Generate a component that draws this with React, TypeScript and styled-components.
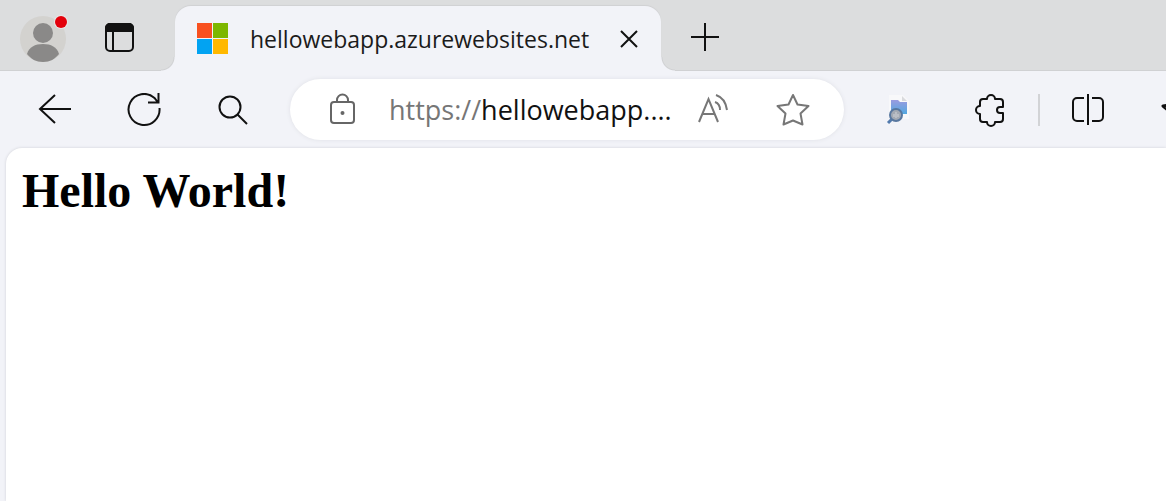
import React from "react";
import styled, { createGlobalStyle } from "styled-components";

const chrome = "#f2f3f8";
const strip = "#dcddde";
const edge = "#d0d1d3";
const uiFont = `"Open Sans", "Noto Sans", sans-serif`;

const GlobalStyle = createGlobalStyle`
  * { box-sizing: border-box; }
  body { margin: 0; background: ${chrome}; overflow-x: hidden; }
`;

const Browser = styled.div`
  display: flex;
  flex-direction: column;
  min-height: 100vh;
  background: ${chrome};
  font-family: ${uiFont};
`;

const TabStrip = styled.header`
  display: flex;
  align-items: flex-start;
  height: 71px;
  padding-top: 6px;
  background: ${strip};
  box-shadow: inset 0 -1px 0 ${edge};
`;

const IconButton = styled.button<{ $width: number; $color?: string }>`
  display: flex;
  flex: none;
  align-items: center;
  justify-content: center;
  width: ${(p) => p.$width}px;
  height: 62px;
  padding: 0;
  border: 0;
  background: none;
  color: ${(p) => p.$color ?? "#111"};
`;

const StripTools = styled.div`
  display: flex;
  flex: none;
  width: 175px;
  padding-left: 4px;
`;

const Tab = styled.div`
  position: relative;
  display: flex;
  flex: 0 1 486px;
  align-items: center;
  height: 65px;
  padding: 0 8px 0 22px;
  border-radius: 16px 16px 0 0;
  background: ${chrome};
  box-shadow: 0 -1px 1px ${edge};

  &::before,
  &::after {
    content: "";
    position: absolute;
    bottom: 0;
    width: 14px;
    height: 14px;
  }
  &::before {
    right: 100%;
    background: radial-gradient(circle at 0 0, transparent 12px, ${edge} 13px, ${chrome} 14px);
  }
  &::after {
    left: 100%;
    background: radial-gradient(circle at 100% 0, transparent 12px, ${edge} 13px, ${chrome} 14px);
  }
`;

const TabTitle = styled.span`
  flex: 1;
  margin-left: 22px;
  overflow: hidden;
  font-size: 23px;
  line-height: 32px;
  white-space: nowrap;
  color: #1b1b1b;
`;

const Toolbar = styled.nav`
  display: flex;
  align-items: center;
  height: 77px;
  padding-left: 10px;
`;

const AddressBar = styled.form`
  display: flex;
  flex: 1;
  align-items: center;
  min-width: 0;
  height: 61px;
  margin: 0 8px 0 13px;
  padding: 0 11px 0 38px;
  border-radius: 31px;
  background: #fff;
  box-shadow: 0 0 4px #dfe0e6;
  font-size: 27px;
  line-height: 34px;
`;

const Scheme = styled.label`
  margin-left: 33px;
  color: #767676;
`;

const AddressInput = styled.input`
  flex: 1;
  min-width: 0;
  padding: 0;
  border: 0;
  outline: 0;
  background: none;
  color: #111;
  font: inherit;
`;

const Divider = styled.span`
  flex: none;
  width: 2px;
  height: 32px;
  margin: 0 2px;
  background: #d2d3d6;
`;

const EdgeButton = styled(IconButton)`
  justify-content: flex-start;
  padding-left: 27px;
  overflow: hidden;
`;

const Page = styled.main`
  flex: 1;
  margin-left: 6px;
  padding: 16px;
  border-radius: 16px 0 0 0;
  background: #fff;
  box-shadow: 0 0 3px #cfd0d6;
`;

const Heading = styled.h1`
  margin: 0;
  font-family: "Liberation Serif", "Times New Roman", serif;
  font-size: 48px;
  line-height: 54px;
  color: #000;
`;

const Icon = styled.svg.attrs<{ stroke?: string }>((p) => ({
  fill: "none",
  stroke: p.stroke ?? "currentColor",
  "aria-hidden": true,
}))`
  display: block;
  flex: none;
`;

export default function App() {
  return (
    <Browser>
      <GlobalStyle />
      <TabStrip>
        <StripTools>
          <IconButton $width={77} aria-label="Profile">
            <Icon width="50" height="50" viewBox="0 0 50 50" stroke="none">
              <circle cx="25" cy="27" r="23" fill="#d3d2cf" />
              <circle cx="25" cy="21" r="10" fill="#8a8988" />
              <path d="M9 42c2-7 8-10 16-10s14 3 16 10c-4 5-9 8-16 8s-12-3-16-8Z" fill="#8a8988" />
              <circle cx="43" cy="10" r="7" fill="#e9e5e5" />
              <circle cx="43" cy="10" r="6" fill="#e3000b" />
            </Icon>
          </IconButton>
          <IconButton $width={77} aria-label="Tab actions">
            <Icon width="30" height="30" viewBox="0 0 30 30" strokeWidth="2">
              <rect x="1" y="2" width="27" height="27" rx="4" />
              <path d="M1 9V6a4 4 0 0 1 4-4h19a4 4 0 0 1 4 4v3Z" fill="currentColor" />
              <path d="M8 9v20" />
            </Icon>
          </IconButton>
        </StripTools>
        <Tab>
          <Icon width="31" height="31" viewBox="0 0 31 31" stroke="none">
            <path d="M0 0h15v15H0Z" fill="#f8501f" />
            <path d="M16 0h15v15H16Z" fill="#7db700" />
            <path d="M0 16h15v15H0Z" fill="#02a3f2" />
            <path d="M16 16h15v15H16Z" fill="#ffb800" />
          </Icon>
          <TabTitle>hellowebapp.azurewebsites.net</TabTitle>
          <IconButton $width={48} aria-label="Close tab">
            <Icon width="18" height="18" viewBox="0 0 18 18" strokeWidth="2">
              <path d="m1 1 16 16M17 1 1 17" />
            </Icon>
          </IconButton>
        </Tab>
        <IconButton $width={88} aria-label="New tab">
          <Icon width="30" height="30" viewBox="0 0 30 30" strokeWidth="2">
            <path d="M15 1v28M1 15h28" />
          </Icon>
        </IconButton>
      </TabStrip>

      <Toolbar>
        <IconButton $width={89} aria-label="Back">
          <Icon width="34" height="32" viewBox="0 0 34 32" strokeWidth="2">
            <path d="M17 1 2 15l15 14M2 15h31" />
          </Icon>
        </IconButton>
        <IconButton $width={89} aria-label="Refresh">
          <Icon width="34" height="34" viewBox="0 0 34 34" strokeWidth="2">
            <path d="M32.500 15A15.500 15.500 0 1 1 27.500 5L31 9.500M31.500 0v9.500H21" />
          </Icon>
        </IconButton>
        <IconButton $width={89} aria-label="Search">
          <Icon width="30" height="30" viewBox="0 0 30 30" strokeWidth="2">
            <circle cx="12" cy="12" r="10.500" />
            <path d="m19.500 19.500 9.500 9.500" />
          </Icon>
        </IconButton>

        <AddressBar onSubmit={(e) => e.preventDefault()}>
          <Icon width="28" height="34" viewBox="0 0 28 34" strokeWidth="2" color="#666">
            <rect x="3" y="9" width="23" height="21" rx="3" />
            <path d="M9 9V7a5.500 5.500 0 0 1 11 0v2" />
            <circle cx="14.500" cy="20" r="2" fill="currentColor" stroke="none" />
          </Icon>
          <Scheme htmlFor="address">https://</Scheme>
          <AddressInput id="address" defaultValue="hellowebapp...." />
          <IconButton $width={80} $color="#777" type="button" aria-label="Read aloud">
            <Icon width="32" height="32" viewBox="0 0 32 32" strokeWidth="2">
              <path d="M2 28 11.500 5 21 28M5 20h13M18 8c3 1 5 4 5 8M19 1c6 2 10 8 11 15" />
            </Icon>
          </IconButton>
          <IconButton $width={80} $color="#777" type="button" aria-label="Add to favorites">
            <Icon width="34" height="34" viewBox="0 0 34 34" strokeWidth="2" strokeLinejoin="round">
              <path d="m17 2 4.500 9.500L32.500 13l-8 7.500 2 11L17 27.500 7.500 31.500l2-11-8-7.500 11-1.500Z" />
            </Icon>
          </IconButton>
        </AddressBar>

        <IconButton $width={92} aria-label="File search extension">
          <Icon width="24" height="30" viewBox="0 0 24 30">
            <defs>
              <linearGradient id="folder" x1="0" y1="0" x2="0" y2="1">
                <stop offset="0" stopColor="#9a9be0" />
                <stop offset="1" stopColor="#52a8e0" />
              </linearGradient>
            </defs>
            <path d="M3 0h14l6 6v18H3Z" fill="#f8f8fa" stroke="none" />
            <path d="M5 5h7l2 2h7v12H5Z" fill="url(#folder)" stroke="none" />
            <path d="M16 1v5h5Z" fill="#d9dadd" stroke="none" />
            <path d="m2 28 5-5" stroke="#527aad" strokeWidth="3" />
            <circle cx="10" cy="20" r="6" fill="#a3a9b3" stroke="#58779f" strokeWidth="2" />
            <path d="M10 17v6M8 19v3M12 19v3" stroke="#d0d2d7" />
          </Icon>
        </IconButton>
        <IconButton $width={92} aria-label="Extensions">
          <Icon width="32" height="34" viewBox="0 0 32 34" strokeWidth="2" strokeLinejoin="round">
            <path d="M9 6h4a4 4 0 0 1 8 0h5a3 3 0 0 1 3 3v5h-3a3 3 0 0 0 0 6h3v6a3 3 0 0 1-3 3h-5a4 4 0 0 1-8 0H9a3 3 0 0 1-3-3v-5a4 4 0 0 1 0-8V9a3 3 0 0 1 3-3Z" />
          </Icon>
        </IconButton>
        <Divider />
        <IconButton $width={92} aria-label="Split screen">
          <Icon width="32" height="34" viewBox="0 0 32 34" strokeWidth="2">
            <path d="M12 5H5a4 4 0 0 0-4 4v15a4 4 0 0 0 4 4h7M20 5h7a4 4 0 0 1 4 4v15a4 4 0 0 1-4 4h-7M16 1v31" />
          </Icon>
        </IconButton>
        <EdgeButton $width={32} aria-label="Favorites">
          <Icon width="32" height="34" viewBox="0 0 32 34" strokeWidth="3" strokeLinejoin="round">
            <path d="m9 19-7-6 7-1" />
          </Icon>
        </EdgeButton>
      </Toolbar>

      <Page>
        <Heading>Hello World!</Heading>
      </Page>
    </Browser>
  );
}
